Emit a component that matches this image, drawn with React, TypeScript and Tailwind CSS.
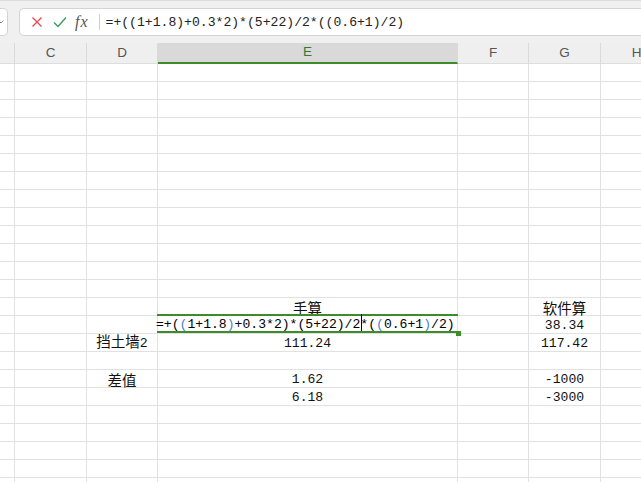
import React from "react";

const COLS = [
  { key: "rh", w: "w-[15px]", label: "" },
  { key: "C", w: "w-[72px]", label: "C" },
  { key: "D", w: "w-[71px]", label: "D" },
  { key: "E", w: "w-[300px]", label: "E" },
  { key: "F", w: "w-[71px]", label: "F" },
  { key: "G", w: "w-[72px]", label: "G" },
  { key: "H", w: "w-[72px]", label: "H" },
];

const MONO = "font-['Liberation_Mono','Noto_Sans_CJK_SC',monospace] text-[13.1px]";
const CJK = "font-['Noto_Sans_CJK_SC',sans-serif] text-[14.5px]";

type Cell = { text: string; cjk?: boolean };
const DATA: Record<number, Record<string, Cell>> = {
  13: { E: { text: "手算", cjk: true }, G: { text: "软件算", cjk: true } },
  14: { G: { text: "38.34" } },
  15: { D: { text: "挡土墙", cjk: true }, E: { text: "111.24" }, G: { text: "117.42" } },
  17: { D: { text: "差值", cjk: true }, E: { text: "1.62" }, G: { text: "-1000" } },
  18: { E: { text: "6.18" }, G: { text: "-3000" } },
};

function Blue({ children }: { children: React.ReactNode }) {
  return <span className="text-[#4a7fd6]">{children}</span>;
}

function FormulaEditor() {
  return (
    <>
      <div className="absolute left-[-1px] right-[-1px] top-[-2px] h-[2px] bg-[#3d8b2b]" />
      <div className="absolute bottom-0 left-[-1px] right-[-1px] h-[2px] bg-[#3d8b2b]" />
      <div className="absolute bottom-[-3px] right-[-4px] z-10 h-[5px] w-[5px] bg-[#3d8b2b]" />
      <div className={`absolute bottom-[1px] left-[-2px] whitespace-nowrap leading-[14px] text-black ${MONO}`}>
        =+(<Blue>(</Blue>1+1.8<Blue>)</Blue>+0.3*2)*(5+22)/2
        <span className="relative inline-block w-0">
          <span className="absolute bottom-[-3px] left-[1px] h-[17px] w-px bg-black" />
        </span>
        *(<Blue>(</Blue>0.6+1<Blue>)</Blue>/2)
      </div>
    </>
  );
}

function CellContent({ cell, col }: { cell: Cell; col: string }) {
  if (col === "D" && cell.text === "挡土墙") {
    return (
      <span className="leading-[14px]">
        <span className={CJK}>挡土墙</span>
        <span className={MONO}>2</span>
      </span>
    );
  }
  return <span className={`leading-[14px] ${cell.cjk ? CJK : MONO}`}>{cell.text}</span>;
}

export default function App() {
  const rows = Array.from({ length: 24 }, (_, i) => i);

  return (
    <div className="h-[482px] w-[641px] overflow-hidden bg-white font-['Liberation_Sans',sans-serif]">
      {/* formula bar */}
      <div className="h-[43px] border-t border-[#dcdcdc] bg-[#f0f0f0] pt-[7px]">
        <div className="flex h-[28px]">
          <div className="flex w-[8px] items-center overflow-hidden rounded-r-[5px] border-y border-r border-[#d4d4d4] bg-white">
            <svg width="6" height="4" viewBox="0 0 6 4" className="ml-[-2px]">
              <path d="M0.5 0.5 L3 3 L5.5 0.5" fill="none" stroke="#888" strokeWidth="1" />
            </svg>
          </div>
          <div className="ml-[11px] flex flex-1 items-center rounded-l-[5px] border border-r-0 border-[#d4d4d4] bg-white">
            <svg width="12" height="12" viewBox="0 0 12 12" className="ml-[11px]">
              <path d="M1.5 1.5 L10.5 10.5 M10.5 1.5 L1.5 10.5" stroke="#e5484d" strokeWidth="1.3" />
            </svg>
            <svg width="14" height="12" viewBox="0 0 14 12" className="ml-[10px]">
              <path d="M1 6.5 L5 10.5 L13 1.5" fill="none" stroke="#3c9a63" strokeWidth="1.4" />
            </svg>
            <span className="ml-[8px] font-['Liberation_Serif',serif] text-[16px] italic leading-none tracking-[1px] text-[#555]">
              fx
            </span>
            <div className="ml-[10px] h-[16px] w-px bg-[#cfcfcf]" />
            <span className={`ml-[6px] mt-[1px] whitespace-nowrap text-[#222] ${MONO}`}>
              =+((1+1.8)+0.3*2)*(5+22)/2*((0.6+1)/2)
            </span>
          </div>
        </div>
      </div>

      {/* column headers */}
      <div className="flex h-[21px] bg-[#efefef]">
        {COLS.map((c) => (
          <div
            key={c.key}
            className={`${c.w} flex shrink-0 items-center justify-center border-r border-[#dadada] text-[13.5px] ${
              c.key === "E"
                ? "border-b-2 border-b-[#3d8b2b] bg-[#d9d9d9] text-[#2f7a3a]"
                : "border-b border-b-[#dedede] text-[#555]"
            }`}
          >
            {c.label}
          </div>
        ))}
      </div>

      {/* grid */}
      {rows.map((r) => (
        <div key={r} className="flex h-[18px]">
          {COLS.map((c) => {
            const cell = DATA[r]?.[c.key];
            const editing = r === 14 && c.key === "E";
            return (
              <div
                key={c.key}
                className={`${c.w} relative flex shrink-0 items-end justify-center border-b border-r border-[#e1e1e1] text-[#111]`}
              >
                {editing ? <FormulaEditor /> : cell ? <CellContent cell={cell} col={c.key} /> : null}
              </div>
            );
          })}
        </div>
      ))}
    </div>
  );
}
